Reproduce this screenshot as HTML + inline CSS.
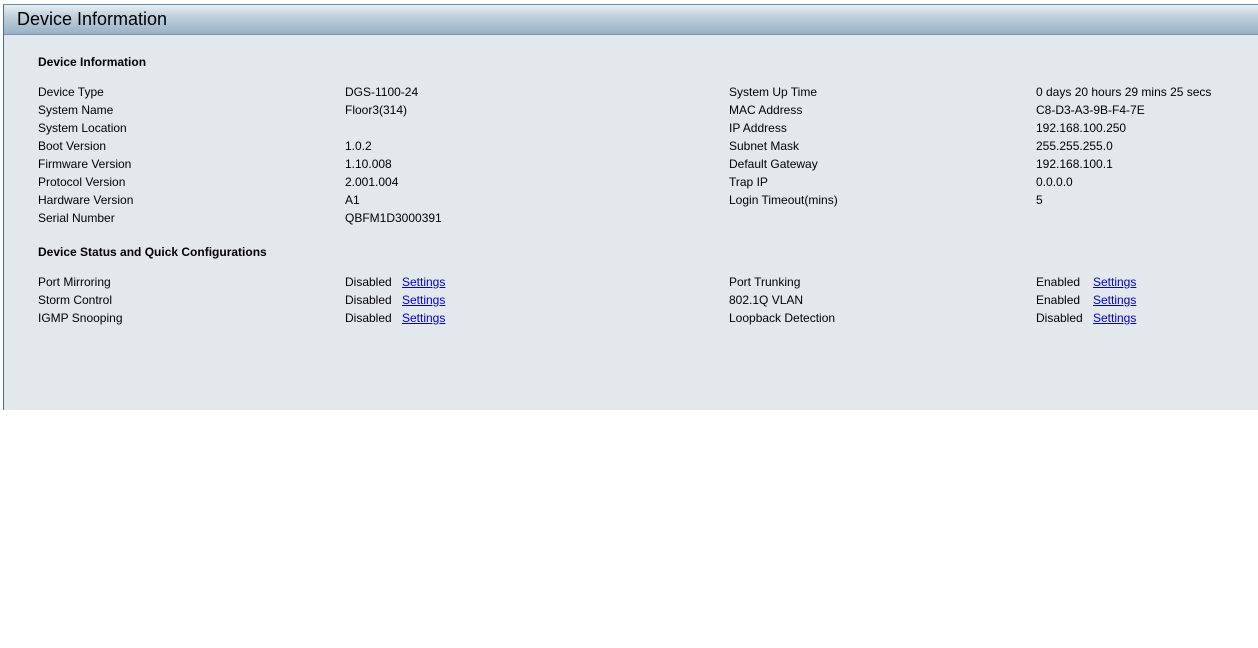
<!DOCTYPE html>
<html><head><style>
body{margin:0;background:#fff;width:1258px;height:648px;position:relative;font-family:"Liberation Sans",Arial,sans-serif;font-size:12px;color:#000;overflow:hidden}
.panel{position:absolute;left:3px;top:4px;width:1255px;height:405px;background:#e3e8ec;border-left:1px solid #4a6f8c;border-top:1px solid #6d8ba3}
.hdr{position:absolute;left:0;top:0;right:0;height:29px;background:linear-gradient(#e8eef3 0%,#c3d2de 35%,#98b2c5 100%);border-bottom:1px solid #7a98ae}
.hdr span{position:absolute;left:13px;top:4px;font-size:18px;color:#000}
.t{position:absolute;line-height:18px;white-space:nowrap}
b.t{font-weight:bold}
a{color:#0000cc;text-decoration:underline}
</style></head><body>
<div class="panel"><div class="hdr"><span>Device Information</span></div></div>
<b class="t" style="left:38px;top:53px">Device Information</b>
<div class="t" style="left:38px;top:83px">Device Type<br>System Name<br>System Location<br>Boot Version<br>Firmware Version<br>Protocol Version<br>Hardware Version<br>Serial Number</div>
<div class="t" style="left:345px;top:83px">DGS-1100-24<br>Floor3(314)<br>&nbsp;<br>1.0.2<br>1.10.008<br>2.001.004<br>A1<br>QBFM1D3000391</div>
<div class="t" style="left:729px;top:83px">System Up Time<br>MAC Address<br>IP Address<br>Subnet Mask<br>Default Gateway<br>Trap IP<br>Login Timeout(mins)</div>
<div class="t" style="left:1036px;top:83px">0 days 20 hours 29 mins 25 secs<br>C8-D3-A3-9B-F4-7E<br>192.168.100.250<br>255.255.255.0<br>192.168.100.1<br>0.0.0.0<br>5</div>
<b class="t" style="left:38px;top:243px">Device Status and Quick Configurations</b>
<div class="t" style="left:38px;top:273px">Port Mirroring<br>Storm Control<br>IGMP Snooping</div>
<div class="t" style="left:345px;top:273px">Disabled<br>Disabled<br>Disabled</div>
<div class="t" style="left:402px;top:273px"><a>Settings</a><br><a>Settings</a><br><a>Settings</a></div>
<div class="t" style="left:729px;top:273px">Port Trunking<br>802.1Q VLAN<br>Loopback Detection</div>
<div class="t" style="left:1036px;top:273px">Enabled<br>Enabled<br>Disabled</div>
<div class="t" style="left:1093px;top:273px"><a>Settings</a><br><a>Settings</a><br><a>Settings</a></div>
</body></html>
